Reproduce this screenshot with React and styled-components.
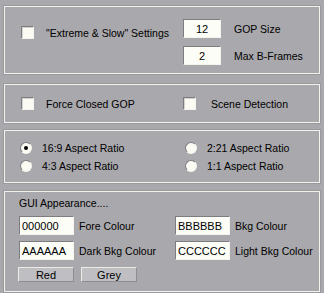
import React from 'react';
import styled, { createGlobalStyle } from 'styled-components';

const GlobalStyle = createGlobalStyle`
  html, body {
    margin: 0;
    padding: 0;
    background: #a9a8ac;
  }
  body {
    font-family: "Liberation Sans", Arial, sans-serif;
    font-size: 10.5px;
    color: #000;
  }
`;

const Page = styled.div`
  width: 324px;
  height: 293px;
  box-sizing: border-box;
  padding: 6px 4px 0 4px;
  display: flex;
  flex-direction: column;
`;

const Group = styled.div`
  box-sizing: border-box;
  width: 316px;
  height: ${p => p.$h}px;
  margin-top: ${p => p.$top || 0}px;
  border: 1px solid #f2f2ec;
  box-shadow: 0 0 0 1px #9a999d;
`;

const TopGroup = styled(Group)`
  display: flex;
  padding: 12px 0 0 16px;
`;

const LeftCheck = styled.div`
  width: 162px;
  padding-top: 7px;
`;

const CheckRow = styled.label`
  display: flex;
  align-items: center;
  gap: ${p => p.$gap}px;
  height: 13px;
  white-space: nowrap;
`;

const Check = styled.span`
  box-sizing: border-box;
  width: 13px;
  height: 13px;
  flex: none;
  background: #fbfbf3;
  border-top: 1px solid #7d7c80;
  border-left: 1px solid #7d7c80;
  border-right: 1px solid #f4f4ee;
  border-bottom: 1px solid #f4f4ee;
  box-shadow: inset 1px 1px 0 #d4d3cf;
`;

const GopGrid = styled.div`
  display: grid;
  grid-template-columns: 38px auto;
  grid-auto-rows: 19px;
  column-gap: 13px;
  row-gap: 8px;
  align-items: center;
`;

const Field = styled.div`
  box-sizing: border-box;
  width: ${p => p.$w}px;
  height: 19px;
  background: #fdfdf7;
  border-top: 1px solid #7d7c80;
  border-left: 1px solid #7d7c80;
  border-right: 1px solid #f4f4ee;
  border-bottom: 1px solid #f4f4ee;
  display: flex;
  align-items: center;
  justify-content: ${p => (p.$center ? 'center' : 'flex-start')};
  padding-left: ${p => (p.$center ? 0 : 2)}px;
  font-size: 11px;
`;

const CheckGroup = styled(Group)`
  display: grid;
  grid-template-columns: 162px auto;
  align-items: center;
  padding-left: 16px;
`;

const RadioGroup = styled(Group)`
  display: grid;
  grid-template-columns: 165px auto;
  grid-auto-rows: 18px;
  align-content: center;
  align-items: center;
  padding-left: 15px;
`;

const RadioRow = styled.label`
  display: flex;
  align-items: center;
  gap: 10px;
  white-space: nowrap;
`;

const Radio = styled.span`
  box-sizing: border-box;
  width: 12px;
  height: 12px;
  flex: none;
  border-radius: 50%;
  background: #fbfbf3;
  border: 1px solid;
  border-color: #7d7c80 #f4f4ee #f4f4ee #7d7c80;
  display: flex;
  align-items: center;
  justify-content: center;
  &::after {
    content: '';
    width: 4px;
    height: 4px;
    border-radius: 50%;
    background: ${p => (p.$on ? '#000' : 'transparent')};
  }
`;

const GuiGroup = styled(Group)`
  display: flex;
  flex-direction: column;
  padding: 5px 0 0 14px;
`;

const Title = styled.div`
  height: 13px;
  line-height: 13px;
  margin-bottom: 6px;
`;

const ColourGrid = styled.div`
  display: grid;
  grid-template-columns: 156px auto;
  grid-auto-rows: 19px;
  row-gap: 6px;
  align-items: center;
`;

const ColourRow = styled.div`
  display: flex;
  align-items: center;
  gap: 5px;
  white-space: nowrap;
`;

const Buttons = styled.div`
  display: flex;
  gap: 7px;
  margin: 7px 0 0 -1px;
`;

const Button = styled.div`
  box-sizing: border-box;
  width: 56px;
  height: 15px;
  background: #bfbec2;
  border-top: 1px solid #ecebe6;
  border-left: 1px solid #ecebe6;
  border-right: 1px solid #8e8d91;
  border-bottom: 1px solid #8e8d91;
  display: flex;
  align-items: center;
  justify-content: center;
  font-size: 11px;
`;

const colours = [
  ['000000', 'Fore Colour'],
  ['BBBBBB', 'Bkg Colour'],
  ['AAAAAA', 'Dark Bkg Colour'],
  ['CCCCCC', 'Light Bkg Colour'],
];

export default function App() {
  return (
    <>
      <GlobalStyle />
      <Page>
        <TopGroup $h={68}>
          <LeftCheck>
            <CheckRow $gap={12}>
              <Check />
              "Extreme &amp; Slow" Settings
            </CheckRow>
          </LeftCheck>
          <GopGrid>
            <Field $w={38} $center>12</Field>
            <span>GOP Size</span>
            <Field $w={38} $center>2</Field>
            <span>Max B-Frames</span>
          </GopGrid>
        </TopGroup>

        <CheckGroup $h={39} $top={10}>
          <CheckRow $gap={12}>
            <Check />
            Force Closed GOP
          </CheckRow>
          <CheckRow $gap={15}>
            <Check />
            Scene Detection
          </CheckRow>
        </CheckGroup>

        <RadioGroup $h={53} $top={7}>
          <RadioRow><Radio $on />16:9 Aspect Ratio</RadioRow>
          <RadioRow><Radio />2:21 Aspect Ratio</RadioRow>
          <RadioRow><Radio />4:3 Aspect Ratio</RadioRow>
          <RadioRow><Radio />1:1 Aspect Ratio</RadioRow>
        </RadioGroup>

        <GuiGroup $h={101} $top={8}>
          <Title>GUI Appearance....</Title>
          <ColourGrid>
            {colours.map(([value, label]) => (
              <ColourRow key={label}>
                <Field $w={55}>{value}</Field>
                {label}
              </ColourRow>
            ))}
          </ColourGrid>
          <Buttons>
            <Button>Red</Button>
            <Button>Grey</Button>
          </Buttons>
        </GuiGroup>
      </Page>
    </>
  );
}
